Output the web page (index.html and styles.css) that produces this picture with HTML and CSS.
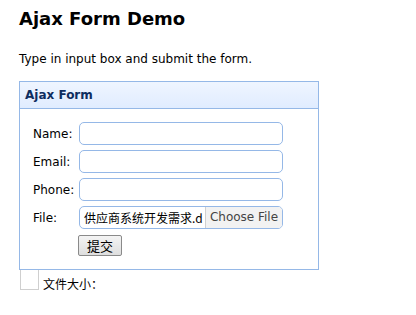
FILE: index.html
```html
<!DOCTYPE html>
<html>
<head>
<meta charset="utf-8">
<link rel="stylesheet" href="styles.css">
</head>
<body>
<h1 class="title">Ajax Form Demo</h1>
<p class="intro">Type in input box and submit the form.</p>
<div class="panel">
  <div class="panel-header">Ajax Form</div>
  <div class="panel-body">
    <div class="row"><label class="lbl">Name:</label><input class="field" type="text"></div>
    <div class="row"><label class="lbl">Email:</label><input class="field" type="text"></div>
    <div class="row"><label class="lbl">Phone:</label><input class="field" type="text"></div>
    <div class="row"><label class="lbl">File:</label>
      <div class="field filebox"><span class="fname">供应商系统开发需求.d</span><span class="fbtn">Choose File</span></div>
    </div>
    <div class="row"><span class="lbl"></span><button class="submit" type="button">提交</button></div>
  </div>
</div>
<div class="after">
  <span class="square"></span><span class="size">文件大小：</span>
</div>
</body>
</html>
```
FILE: styles.css
```css
body {
  margin: 0;
  padding: 0 0 0 19px;
  font-family: "DejaVu Sans", Verdana, sans-serif;
  color: #000;
  background: #fff;
}
.title {
  margin: 0;
  padding-top: 8px;
  font-size: 18px;
  line-height: 21px;
  font-weight: bold;
}
.intro {
  margin: 0;
  padding-top: 23px;
  font-size: 12px;
  line-height: 14px;
}
.panel {
  margin-top: 15px;
  width: 298px;
  border: 1px solid #95b8e7;
}
.panel-header {
  height: 26px;
  line-height: 26px;
  padding-left: 5px;
  background: linear-gradient(#eff5ff, #e0ecff);
  border-bottom: 1px solid #95b8e7;
  color: #0e2d5f;
  font-weight: bold;
  font-size: 12px;
}
.panel-body {
  padding: 13px 0 12px 13px;
  display: flex;
  flex-direction: column;
  gap: 5px;
}
.row {
  display: flex;
  align-items: center;
  height: 23px;
}
.lbl {
  width: 46px;
  font-size: 12px;
  color: #000;
}
.field {
  box-sizing: border-box;
  width: 204px;
  height: 23px;
  margin: 0;
  padding: 0;
  border: 1px solid #95b8e7;
  border-radius: 5px;
  background: #fff;
}
.filebox {
  display: flex;
  align-items: stretch;
  overflow: hidden;
  font-size: 12px;
}
.fname {
  flex: 1;
  padding-left: 4px;
  line-height: 21px;
  white-space: nowrap;
  overflow: hidden;
  font-family: "Noto Sans CJK SC", "DejaVu Sans", sans-serif;
}
.fbtn {
  width: 76px;
  line-height: 21px;
  text-align: center;
  background: #f2f2f2;
  border-left: 1px solid #d0d0d0;
  color: #444;
  white-space: nowrap;
}
.submit {
  box-sizing: border-box;
  width: 44px;
  height: 21px;
  margin-left: -1px;
  padding: 0;
  border: 1px solid #8a8a8a;
  border-radius: 2px;
  background: linear-gradient(#f4f4f4, #dedede);
  font-family: "Noto Sans CJK SC", sans-serif;
  font-size: 13px;
  line-height: 19px;
  color: #000;
}
.after {
  display: flex;
  align-items: flex-end;
  margin-left: 1px;
}
.square {
  box-sizing: border-box;
  width: 19px;
  height: 20px;
  border: 1px solid #cfcfcf;
  border-top: 0;
}
.size {
  margin-left: 4px;
  font-family: "Noto Sans CJK SC", sans-serif;
  font-size: 12px;
  line-height: 14px;
  margin-bottom: -1px;
}
```
